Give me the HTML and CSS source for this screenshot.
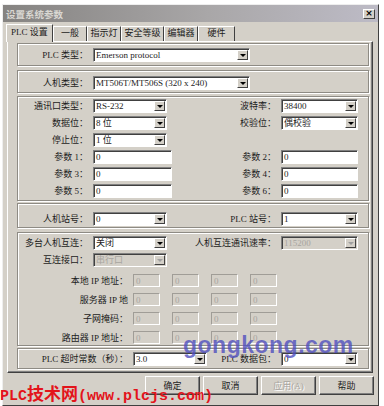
FILE: index.html
```html
<!DOCTYPE html>
<html lang="zh-CN">
<head>
    <meta charset="UTF-8">
    <title>设置系统参数</title>
    <link rel="stylesheet" href="styles.css">
</head>
<body>
    <div class="dialog">
        <div class="titlebar">
            <span class="title">设置系统参数</span>
            <span class="close">×</span>
        </div>

        <div class="tabs">
            <div class="tab tab-plc active">PLC 设置</div>
            <div class="tab tab-general">一般</div>
            <div class="tab tab-lamp">指示灯</div>
            <div class="tab tab-security">安全等级</div>
            <div class="tab tab-editor">编辑器</div>
            <div class="tab tab-hardware">硬件</div>
        </div>

        <div class="panel">
            <!-- PLC type -->
            <div class="group g-plc">
                <div class="grid">
                    <span class="lbl">PLC 类型：</span>
                    <div class="field select w-long"><span class="val">Emerson protocol</span><span class="drop"><i></i></span></div>
                </div>
            </div>

            <!-- HMI type -->
            <div class="group g-hmi">
                <div class="grid">
                    <span class="lbl">人机类型：</span>
                    <div class="field select w-long"><span class="val">MT506T/MT506S (320 x 240)</span><span class="drop"><i></i></span></div>
                </div>
            </div>

            <!-- communication -->
            <div class="group g-comm">
                <div class="grid">
                    <span class="lbl">通讯口类型：</span>
                    <div class="field select w-left"><span class="val">RS-232</span><span class="drop"><i></i></span></div>
                    <span class="lbl">波特率：</span>
                    <div class="field select w-right"><span class="val">38400</span><span class="drop"><i></i></span></div>

                    <span class="lbl">数据位：</span>
                    <div class="field select w-left"><span class="val">8 位</span><span class="drop"><i></i></span></div>
                    <span class="lbl">校验位：</span>
                    <div class="field select w-right"><span class="val">偶校验</span><span class="drop"><i></i></span></div>

                    <span class="lbl">停止位：</span>
                    <div class="field select w-left"><span class="val">1 位</span><span class="drop"><i></i></span></div>
                    <span></span>
                    <span></span>

                    <span class="lbl">参数 1：</span>
                    <div class="field w-input"><span class="val">0</span></div>
                    <span class="lbl">参数 2：</span>
                    <div class="field w-right"><span class="val">0</span></div>

                    <span class="lbl">参数 3：</span>
                    <div class="field w-input"><span class="val">0</span></div>
                    <span class="lbl">参数 4：</span>
                    <div class="field w-right"><span class="val">0</span></div>

                    <span class="lbl">参数 5：</span>
                    <div class="field w-input"><span class="val">0</span></div>
                    <span class="lbl">参数 6：</span>
                    <div class="field w-right"><span class="val">0</span></div>
                </div>
            </div>

            <!-- station numbers -->
            <div class="group g-station">
                <div class="grid">
                    <span class="lbl">人机站号：</span>
                    <div class="field select w-left"><span class="val">0</span><span class="drop"><i></i></span></div>
                    <span class="lbl">PLC 站号：</span>
                    <div class="field select w-right"><span class="val">1</span><span class="drop"><i></i></span></div>
                </div>
            </div>

            <!-- multi HMI link -->
            <div class="group g-link">
                <div class="grid">
                    <span class="lbl">多台人机互连：</span>
                    <div class="field select w-left"><span class="val">关闭</span><span class="drop"><i></i></span></div>
                    <span class="lbl">人机互连通讯速率：</span>
                    <div class="field select w-right disabled"><span class="val">115200</span><span class="drop"><i></i></span></div>

                    <span class="lbl">互连接口：</span>
                    <div class="field select w-left disabled"><span class="val">串行口</span><span class="drop"><i></i></span></div>
                </div>
                <div class="ip-rows">
                    <div class="ip-row">
                        <span class="lbl">本地 IP 地址：</span>
                        <div class="field ip disabled"><span class="val">0</span></div>
                        <div class="field ip disabled"><span class="val">0</span></div>
                        <div class="field ip disabled"><span class="val">0</span></div>
                        <div class="field ip disabled"><span class="val">0</span></div>
                    </div>
                    <div class="ip-row">
                        <span class="lbl">服务器 IP 地</span>
                        <div class="field ip disabled"><span class="val">0</span></div>
                        <div class="field ip disabled"><span class="val">0</span></div>
                        <div class="field ip disabled"><span class="val">0</span></div>
                        <div class="field ip disabled"><span class="val">0</span></div>
                    </div>
                    <div class="ip-row">
                        <span class="lbl">子网掩码：</span>
                        <div class="field ip disabled"><span class="val">0</span></div>
                        <div class="field ip disabled"><span class="val">0</span></div>
                        <div class="field ip disabled"><span class="val">0</span></div>
                        <div class="field ip disabled"><span class="val">0</span></div>
                    </div>
                    <div class="ip-row">
                        <span class="lbl">路由器 IP 地址：</span>
                        <div class="field ip disabled"><span class="val">0</span></div>
                        <div class="field ip disabled"><span class="val">0</span></div>
                        <div class="field ip disabled"><span class="val">0</span></div>
                        <div class="field ip disabled"><span class="val">0</span></div>
                    </div>
                </div>
            </div>

            <!-- timeout -->
            <div class="group g-timeout">
                <div class="grid grid-timeout">
                    <span class="lbl">PLC 超时常数（秒）：</span>
                    <div class="field select w-left"><span class="val">3.0</span><span class="drop"><i></i></span></div>
                    <span class="lbl">PLC 数据包：</span>
                    <div class="field select w-right"><span class="val">0</span><span class="drop"><i></i></span></div>
                </div>
            </div>
        </div>

        <div class="buttons">
            <button class="btn">确定</button>
            <button class="btn">取消</button>
            <button class="btn disabled">应用(A)</button>
            <button class="btn">帮助</button>
        </div>
    </div>

    <!-- watermarks stamped over the screenshot -->
    <div class="mark-gk">gongkong.com</div>
    <div class="mark-plc">PLC<span class="cjk">技术网</span>(www.plcjs.com)</div>
</body>
</html>
```

FILE: styles.css
```css
body {
    margin: 0;
    background-color: #ffffff;
    font-family: "Liberation Serif", "Noto Sans CJK SC", serif;
    font-size: 9px;
    color: #1c1c1c;
}
.dialog {
    box-sizing: border-box;
    width: 377px;
    height: 402px;
    margin: 4px 0 0 2px;
    background-color: #d4d0c8;
    border: 1px solid;
    border-color: #eeeeee #404040 #404040 #eeeeee;
}

/* title bar (inactive window) */
.titlebar {
    display: flex;
    align-items: center;
    justify-content: space-between;
    height: 17px;
    padding: 0 3px 0 3px;
    background: linear-gradient(to right, #858381, #a9a7a8 55%, #bdbbc6);
}
.title {
    font-family: "Noto Sans CJK SC", sans-serif;
    font-size: 9.5px;
    font-weight: bold;
    color: #d9d7d2;
}
.close {
    box-sizing: border-box;
    width: 12px;
    height: 10px;
    background-color: #d4d0c8;
    border: 1px solid;
    border-color: #ffffff #404040 #404040 #ffffff;
    font: bold 9px/7px "DejaVu Sans", sans-serif;
    text-align: center;
    color: #000;
}

/* tabs */
.tabs {
    display: flex;
    align-items: flex-end;
    height: 17px;
    margin-top: 2px;
    padding-left: 3px;
}
.tab {
    box-sizing: border-box;
    height: 15px;
    line-height: 13px;
    text-align: center;
    border-top: 1px solid #ffffff;
    border-left: 1px solid #ffffff;
    border-right: 1px solid #404040;
    font-family: "Liberation Serif", "Noto Sans CJK SC", serif;
}
.tab.active {
    position: relative;
    z-index: 1;
    height: 18px;
    margin-bottom: -1px;
    line-height: 15px;
    background-color: #d4d0c8;
}
.tab-plc { width: 47px; }
.tab-general { width: 34px; }
.tab-lamp { width: 34px; }
.tab-security { width: 43px; }
.tab-editor { width: 34px; }
.tab-hardware { width: 37px; }

/* tab page */
.panel {
    box-sizing: border-box;
    display: flex;
    flex-direction: column;
    height: 332px;
    margin: 0 5px 0 4px;
    padding: 1px 3px 0 9px;
    border: 1px solid;
    border-color: #ffffff #404040 #404040 #ffffff;
    box-shadow: inset -1px -1px 0 #808080;
}
.group {
    box-sizing: border-box;
    border: 1px solid #8e8b84;
    box-shadow: inset 1px 1px 0 #ffffff, 1px 1px 0 #ffffff;
}
.g-plc { height: 23px; padding-top: 4px; margin-bottom: 4px; }
.g-hmi { height: 23px; padding-top: 5px; margin-bottom: 3px; }
.g-comm { height: 105px; padding-top: 2px; margin-bottom: 2px; }
.g-station { height: 25px; padding-top: 8px; margin-bottom: 4px; }
.g-link { height: 114px; padding-top: 3px; margin-bottom: 2px; }
.g-timeout { height: 21px; padding-top: 3px; }

.grid {
    display: grid;
    grid-template-columns: 75px 79px 109px 77px;
    grid-auto-rows: 14px;
    row-gap: 3px;
    align-items: center;
}
.grid-timeout {
    grid-template-columns: 115px 74px 74px 77px;
}
.lbl {
    padding-right: 5px;
    text-align: right;
    white-space: nowrap;
    line-height: 14px;
}

/* edit boxes and combo boxes */
.field {
    box-sizing: border-box;
    display: flex;
    align-items: center;
    height: 14px;
    background-color: #ffffff;
    border: 1px solid;
    border-color: #808080 #ffffff #ffffff #808080;
    box-shadow: inset 1px 1px 0 #404040;
}
.val {
    flex: 1;
    padding-left: 2px;
    line-height: 12px;
    white-space: nowrap;
    overflow: hidden;
}
.drop {
    box-sizing: border-box;
    display: flex;
    align-items: center;
    justify-content: center;
    width: 11px;
    height: 10px;
    margin-right: 1px;
    background-color: #d4d0c8;
    border: 1px solid;
    border-color: #ffffff #404040 #404040 #ffffff;
}
.drop i {
    width: 0;
    height: 0;
    border-left: 3px solid transparent;
    border-right: 3px solid transparent;
    border-top: 3px solid #000000;
}
.w-long { width: 157px; grid-column: span 2; }
.w-left { width: 74px; }
.w-input { width: 79px; }
.w-right { width: 77px; }

.field.disabled {
    background-color: #d4d0c8;
    color: #a8a5a0;
}
.field.disabled .drop i {
    border-top-color: #a0a0a0;
}

.ip-rows {
    display: flex;
    flex-direction: column;
    gap: 6px;
    margin-top: 7px;
}
.ip-row {
    display: flex;
    align-items: center;
    height: 13px;
}
.ip-row .lbl {
    width: 115px;
    box-sizing: border-box;
}
.field.ip {
    width: 27px;
    height: 13px;
    margin-right: 12px;
    border-color: #a09d97 #ffffff #ffffff #a09d97;
    box-shadow: none;
}

/* bottom buttons */
.buttons {
    display: flex;
    justify-content: flex-end;
    gap: 3px;
    padding: 3px 4px 0 0;
}
.btn {
    box-sizing: border-box;
    width: 55px;
    height: 19px;
    padding: 0;
    background-color: #d4d0c8;
    border: 1px solid;
    border-color: #ffffff #404040 #404040 #ffffff;
    box-shadow: inset -1px -1px 0 #808080;
    font-family: "Liberation Serif", "Noto Sans CJK SC", serif;
    font-size: 9px;
    color: #1c1c1c;
}
.btn.disabled {
    color: #a8a5a0;
    text-shadow: 1px 1px 0 #ffffff;
}

/* watermarks */
.mark-gk {
    position: absolute;
    left: 183px;
    top: 332px;
    font-family: "Liberation Sans", sans-serif;
    font-size: 23px;
    font-weight: bold;
    letter-spacing: 0.5px;
    color: rgba(78, 78, 190, 0.78);
}
.mark-plc {
    position: absolute;
    left: 0;
    top: 382px;
    font-family: "Liberation Mono", monospace;
    font-size: 15px;
    font-weight: bold;
    line-height: 22px;
    color: #e3141b;
    white-space: nowrap;
}
.mark-plc .cjk {
    font-family: "Noto Sans CJK SC", sans-serif;
    font-size: 17px;
}
```
